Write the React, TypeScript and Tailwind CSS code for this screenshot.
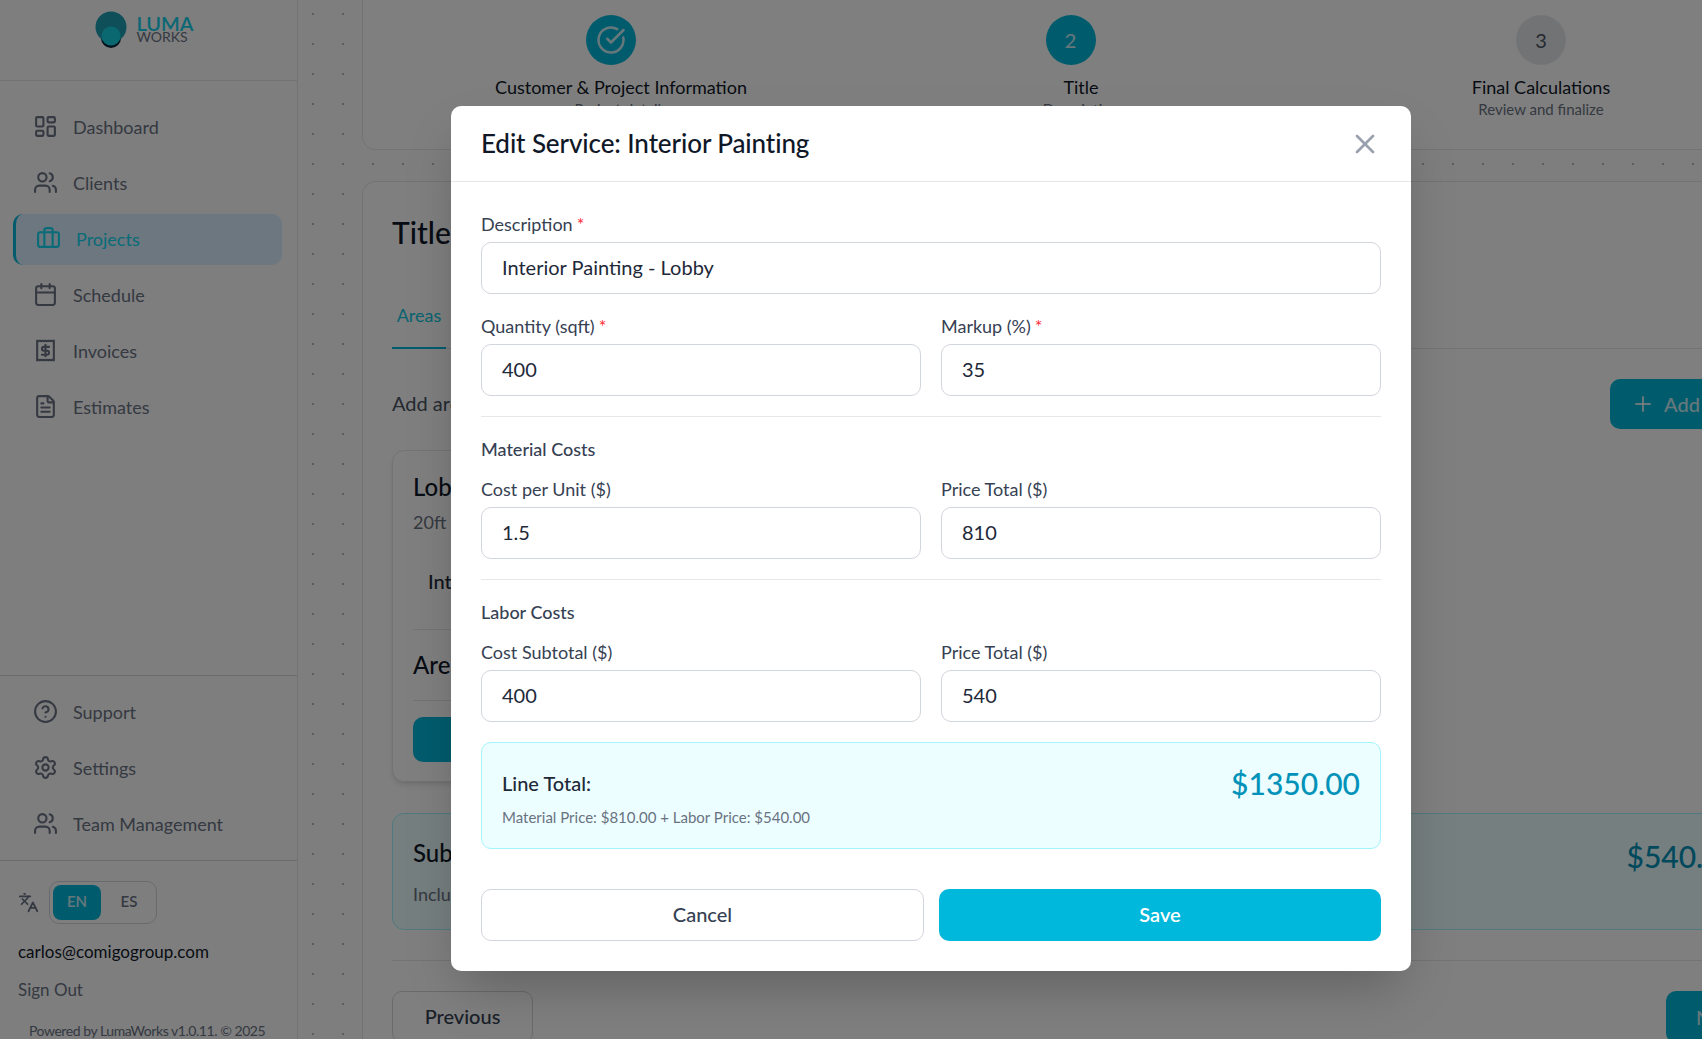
import React from "react";
import { LayoutDashboard, Users, Briefcase, Calendar, FileText, CircleHelp, Settings, Languages, CircleCheckBig, X, Plus } from "lucide-react";

const font = { fontFamily: '"Lato", "Open Sans", sans-serif' };

function InvoiceIcon({ size = 25 }: { size?: number }) {
  return (
    <svg width={size} height={size} viewBox="0 0 24 24" fill="none" stroke="currentColor" strokeWidth={2} strokeLinecap="round" strokeLinejoin="round">
      <path d="M4 2.5v19l1.3-.6 1.3.6 1.3-.6 1.4.6 1.3-.6 1.4.6 1.3-.6 1.4.6 1.3-.6 1.4.6 1.3-.6 1.3.6v-19l-1.3.6-1.3-.6-1.4.6-1.3-.6-1.4.6-1.3-.6-1.3.6-1.4-.6-1.3.6-1.4-.6-1.3.6z" />
      <path d="M12 6.5v11" />
      <path d="M15.5 8.5h-5a1.9 1.9 0 0 0 0 3.8h3a1.9 1.9 0 0 1 0 3.8h-5" />
    </svg>
  );
}

function NavItem({ icon, label, active }: { icon: React.ReactNode; label: string; active?: boolean }) {
  return (
    <div
      className={
        active
          ? "flex h-[51px] items-center gap-[15px] rounded-[10px] border-l-[3px] border-cyan-500 bg-[#d8eeff] pb-[2px] pl-[20px] text-[#10d8f0]"
          : "flex h-[51px] items-center gap-[15px] rounded-[10px] pb-[2px] pl-[20px] text-gray-500"
      }
    >
      <span className="flex h-[25px] w-[25px] shrink-0 items-center justify-center">{icon}</span>
      <span className="text-[18px] leading-none">{label}</span>
    </div>
  );
}

function Field({ label, value, required }: { label: string; value: string; required?: boolean }) {
  return (
    <div className="min-w-0 flex-1">
      <div className="mb-[6px] h-[24px] text-[18px] leading-[24px] text-gray-700">
        {label}
        {required && <span className="ml-[4px] text-red-500">*</span>}
      </div>
      <input
        readOnly
        value={value}
        className="h-[52px] w-full rounded-[10px] border border-gray-300 bg-white px-[20px] pb-[2px] text-[20px] text-gray-800 outline-none"
      />
    </div>
  );
}

function Step({ top, title, sub, state, offset }: { top: React.ReactNode; title: string; sub: string; state: "done" | "active" | "todo"; offset?: boolean }) {
  const circle =
    state === "todo" ? "bg-gray-200 text-gray-600" : "bg-cyan-500 text-white";
  return (
    <div className="flex flex-col items-center">
      <div className={(offset ? "mr-[21px] " : "") + "flex h-[50px] w-[50px] items-center justify-center rounded-full text-[20px] " + circle}>{top}</div>
      <div className="mt-[10px] h-[24px] text-[18px] leading-[24px] text-gray-900">{title}</div>
      <div className="h-[20px] text-[15px] leading-[20px] text-gray-500">{sub}</div>
    </div>
  );
}

export default function App() {
  return (
    <div className="relative flex h-screen w-screen overflow-hidden bg-[#fdfdfd]" style={font}>
      <aside className="flex h-full w-[298px] shrink-0 flex-col border-r border-gray-200 bg-[#fcfdfe]">
        <div className="flex h-[81px] shrink-0 justify-center border-b border-gray-200 pr-[9px]">
          <div className="flex h-[52px] items-start">
            <svg width="34" height="48" viewBox="0 0 34 48" className="mt-[1px]">
              <circle cx="17" cy="37" r="10" fill="#02233a" />
              <circle cx="17" cy="26" r="15.5" fill="#1f9fb2" />
              <circle cx="17" cy="35" r="9.5" fill="#12d0e0" />
            </svg>
            <div className="ml-[8px] flex flex-col">
              <span className="mt-[15px] text-[20px] font-semibold leading-[16px] text-[#14d0e8]">LUMA</span>
              <span className="text-[14px] leading-[12px] text-gray-500">WORKS</span>
            </div>
          </div>
        </div>
        <nav className="flex flex-1 flex-col gap-[5px] pl-[13px] pr-[15px] pt-[21px]">
          <NavItem icon={<LayoutDashboard size={25} strokeWidth={2} />} label="Dashboard" />
          <NavItem icon={<Users size={25} strokeWidth={2} />} label="Clients" />
          <NavItem icon={<Briefcase size={25} strokeWidth={2} />} label="Projects" active />
          <NavItem icon={<Calendar size={25} strokeWidth={2} />} label="Schedule" />
          <NavItem icon={<InvoiceIcon />} label="Invoices" />
          <NavItem icon={<FileText size={25} strokeWidth={2} />} label="Estimates" />
        </nav>
        <div className="flex shrink-0 flex-col gap-[5px] border-t border-gray-300 pb-[10px] pl-[13px] pr-[15px] pt-[11px]">
          <NavItem icon={<CircleHelp size={25} strokeWidth={2} />} label="Support" />
          <NavItem icon={<Settings size={25} strokeWidth={2} />} label="Settings" />
          <NavItem icon={<Users size={25} strokeWidth={2} />} label="Team Management" />
        </div>
        <div className="h-[179px] shrink-0 border-t border-gray-300 pl-[18px] pt-[20px]">
          <div className="flex items-center gap-[10px]">
            <Languages size={21} className="text-gray-500" />
            <div className="flex h-[43px] w-[108px] items-center rounded-[10px] border border-gray-300 p-[3px]">
              <span className="flex h-[35px] w-[48px] items-center justify-center rounded-[8px] bg-cyan-500 pb-[2px] text-[15px] font-semibold text-white/80">EN</span>
              <span className="flex h-[35px] flex-1 items-center justify-center pb-[2px] pl-[4px] text-[15px] font-semibold text-gray-500">ES</span>
            </div>
          </div>
          <div className="mt-[16px] text-[17px] leading-[24px] text-gray-900">carlos@comigogroup.com</div>
          <div className="mt-[14px] text-[17px] leading-[24px] text-gray-500">Sign Out</div>
          <div className="ml-[11px] mt-[19px] whitespace-nowrap text-[14px] leading-[20px] tracking-[-0.45px] text-gray-500">Powered by LumaWorks v1.0.11. © 2025</div>
        </div>
      </aside>

      <main className="min-w-0 flex-1 overflow-hidden bg-[radial-gradient(circle,#b4b8c0_1px,transparent_1.2px)] bg-[size:30px_30px] bg-[position:0_-1px] pl-[64px]">
        <div className="w-[1460px]">
          <div className="grid h-[150px] grid-cols-[460px_460px_460px] rounded-bl-[14px] border-b border-l border-gray-200 bg-white pl-[28px] pt-[15px]">
            <Step state="done" offset title="Customer & Project Information" sub="Project details" top={<CircleCheckBig size={30} strokeWidth={2} className="text-white/80" />} />
            <Step state="active" offset title="Title" sub="Description" top={<span className="text-white/80">2</span>} />
            <Step state="todo" title="Final Calculations" sub="Review and finalize" top="3" />
          </div>

          <section className="mt-[31px] rounded-t-[14px] border-l border-t border-gray-200 bg-white px-[29px] pb-[20px] pt-[32px]">
            <h1 className="h-[36px] text-[30px] font-medium leading-[36px] text-gray-900">Title</h1>
            <div className="mt-[45px] flex h-[54px] border-b border-gray-200">
              <div className="flex h-[54px] w-[54px] items-start justify-center border-b-2 border-cyan-500 pt-[7px] text-[18px] text-[#10c8e0]">Areas</div>
            </div>
            <div className="mt-[30px] flex h-[50px] items-center justify-between pr-[33px]">
              <span className="pb-[2px] text-[20px] text-gray-600">Add areas and services</span>
              <button className="flex h-[50px] w-[150px] items-center gap-[9px] whitespace-nowrap rounded-[10px] bg-cyan-500 pl-[21px] text-[20px] font-medium text-white/80">
                <Plus size={24} />
                Add Area
              </button>
            </div>
            <div className="mt-[21px] h-[332px] w-[1000px] rounded-[12px] border border-gray-200 bg-white px-[20px] pt-[21px] shadow-md">
              <div className="h-[30px] text-[24px] font-medium leading-[30px] text-gray-900">Lobby</div>
              <div className="mt-[8px] h-[24px] text-[18px] leading-[24px] text-gray-500">20ft x 20ft</div>
              <div className="mt-[35px] h-[24px] pl-[15px] text-[20px] font-medium leading-[24px] text-gray-800">Interior Painting</div>
              <div className="mt-[36px] border-t border-gray-200 pt-[20px] text-[24px] font-medium leading-[30px] text-gray-900">Area Total</div>
              <div className="mt-[20px] border-t border-gray-200 pt-[16px]">
                <div className="h-[45px] w-[200px] rounded-[10px] bg-cyan-500" />
              </div>
            </div>
            <div className="mt-[31px] flex h-[117px] items-start justify-between rounded-[12px] border border-cyan-200 bg-cyan-50 px-[20px] pt-[24px]">
              <div>
                <div className="h-[30px] text-[24px] font-medium leading-[30px] text-gray-900">Subtotal</div>
                <div className="mt-[14px] text-[18px] leading-[24px] text-gray-500">Includes all areas</div>
              </div>
              <div className="mr-[34px] whitespace-nowrap text-[30px] font-medium leading-[36px] text-cyan-600">$540.00</div>
            </div>
            <div className="mt-[30px] flex justify-between border-t border-gray-200 pt-[30px] pr-[27px]">
              <button className="h-[52px] w-[141px] rounded-[10px] border border-gray-300 pb-[2px] text-[20px] font-medium text-gray-700">Previous</button>
              <button className="h-[52px] w-[100px] rounded-[10px] bg-cyan-500 pl-[30px] text-left text-[20px] font-medium text-white/80">Next</button>
            </div>
          </section>
        </div>
      </main>

      <div className="absolute inset-0 bg-black/50" />

      <div className="absolute left-[451px] top-[106px] w-[960px] rounded-[10px] bg-white shadow-2xl">
        <div className="flex h-[76px] items-center justify-between border-b border-gray-200 px-[30px]">
          <h2 className="pb-[2px] text-[26px] font-medium leading-none tracking-[-0.1px] text-gray-900">Edit Service: Interior Painting</h2>
          <X size={32} strokeWidth={2} className="text-gray-400" />
        </div>
        <div className="flex flex-col p-[30px]">
          <Field label="Description" value="Interior Painting - Lobby" required />
          <div className="mt-[20px] flex gap-[20px]">
            <Field label="Quantity (sqft)" value="400" required />
            <Field label="Markup (%)" value="35" required />
          </div>
          <div className="mt-[20px] border-t border-gray-200" />
          <div className="mt-[20px] h-[24px] text-[18px] font-medium leading-[24px] text-gray-700">Material Costs</div>
          <div className="mt-[16px] flex gap-[20px]">
            <Field label="Cost per Unit ($)" value="1.5" />
            <Field label="Price Total ($)" value="810" />
          </div>
          <div className="mt-[20px] border-t border-gray-200" />
          <div className="mt-[20px] h-[24px] text-[18px] font-medium leading-[24px] text-gray-700">Labor Costs</div>
          <div className="mt-[16px] flex gap-[20px]">
            <Field label="Cost Subtotal ($)" value="400" />
            <Field label="Price Total ($)" value="540" />
          </div>
          <div className="mt-[20px] h-[107px] rounded-[10px] border border-cyan-200 bg-cyan-50 px-[20px] pt-[20px]">
            <div className="flex h-[40px] items-center justify-between">
              <span className="text-[20px] font-medium text-gray-800">Line Total:</span>
              <span className="text-[30px] font-medium text-cyan-600">$1350.00</span>
            </div>
            <div className="mt-[4px] text-[15px] leading-[20px] text-gray-500">Material Price: $810.00 + Labor Price: $540.00</div>
          </div>
          <div className="mt-[40px] flex gap-[15px]">
            <button className="h-[52px] w-[443px] rounded-[10px] border border-gray-300 bg-white pb-[2px] text-[20px] font-medium text-gray-700">Cancel</button>
            <button className="h-[52px] flex-1 rounded-[10px] bg-cyan-500 pb-[2px] text-[20px] font-semibold text-white">Save</button>
          </div>
        </div>
      </div>
    </div>
  );
}
